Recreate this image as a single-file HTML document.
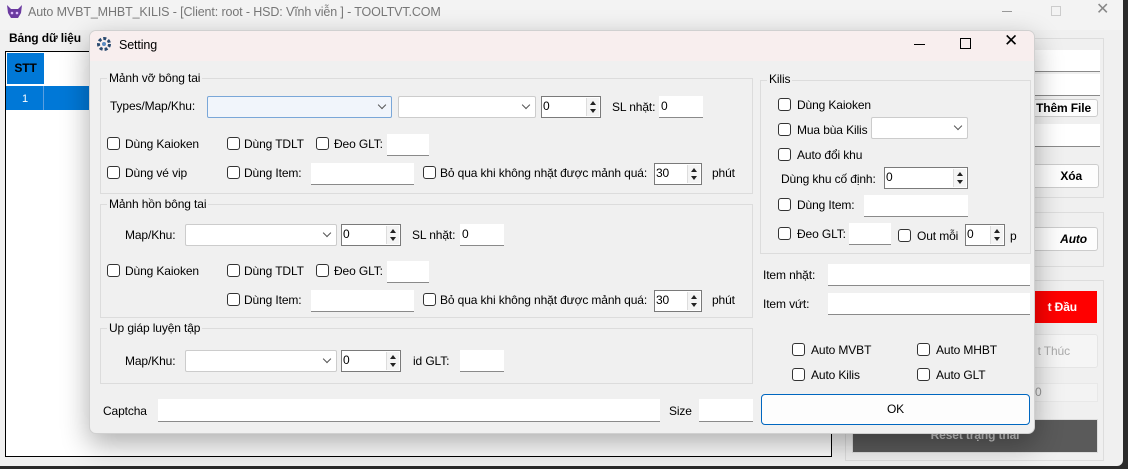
<!DOCTYPE html>
<html><head><meta charset="utf-8"><style>
*{box-sizing:border-box;margin:0;padding:0}
body{width:1128px;height:469px;overflow:hidden;background:#2a2a2a;font-family:"Liberation Sans","DejaVu Sans",sans-serif;font-size:12px;color:#000;position:relative;letter-spacing:-0.12px}
.a{position:absolute}
.t{position:absolute;white-space:nowrap;line-height:14px}
.tb{position:absolute;background:#fff;border-bottom:1px solid #8a8a8a}
.cb{position:absolute;width:13px;height:13px;border:1px solid #333;border-radius:3px;background:#fff}
.cmb{position:absolute;background:#fff;border:1px solid #ccc;border-radius:2px}
.cmb:after{content:"";position:absolute;right:6px;top:5px;width:5px;height:5px;border-right:1px solid #555;border-bottom:1px solid #555;transform:rotate(45deg)}
.sp{position:absolute;background:#fff;border:1px solid #7a7a7a;padding-left:1px;line-height:18px}
.sp i{position:absolute;right:1px;top:1px;width:13px;bottom:1px;border-left:1px solid #ddd;background:#f4f4f4}
.sp i:before{content:"";position:absolute;left:3px;top:3px;border:3px solid transparent;border-bottom:4px solid #222;border-top:0}
.sp i:after{content:"";position:absolute;left:3px;bottom:3px;border:3px solid transparent;border-top:4px solid #222;border-bottom:0}
.grp{position:absolute;border:1px solid #dcdcdc}
.gl{position:absolute;background:#f0f0f0;padding:0 2px;white-space:nowrap;line-height:14px}
</style></head><body>
<!-- main window -->
<div class="a" style="left:0;top:0;width:1123px;height:466px;background:#f0f0f0;border-radius:0 0 6px 0"></div>
<div class="a" style="left:0;top:0;width:1123px;height:30px;background:#f3f3f3"></div>
<svg class="a" style="left:6px;top:4px" width="17" height="16" viewBox="0 0 17 16"><path d="M1 1 L5 5 L12 5 L16 1 L15 9 L12 14 L5 14 L2 9Z" fill="#6b3aa0"/><circle cx="6" cy="9" r="1.3" fill="#e0c0ff"/><circle cx="11" cy="9" r="1.3" fill="#e0c0ff"/></svg>
<div class="t" style="left:28px;top:5px;color:#777;font-size:12.5px">Auto MVBT_MHBT_KILIS - [Client: root - HSD: Vĩnh viễn ] - TOOLTVT.COM</div>
<div class="a" style="left:1002px;top:11px;width:10px;height:1px;background:#999"></div>
<div class="a" style="left:1051px;top:6px;width:10px;height:10px;border:1px solid #ccc"></div>
<div class="t" style="left:1096px;top:3px;color:#888;font-size:16px">✕</div>
<div class="t" style="left:9px;top:31px;font-weight:bold">Bảng dữ liệu</div>
<div class="a" style="left:5px;top:51px;width:827px;height:406px;border:1px solid #000;background:#fff"></div>
<div class="a" style="left:7px;top:53px;width:37px;height:31px;background:#0078d7;color:#000;font-weight:bold;text-align:center;line-height:31px">STT</div>
<div class="a" style="left:6px;top:86px;width:825px;height:24px;background:#0078d7"></div>
<div class="a" style="left:43px;top:86px;width:1px;height:24px;background:#5a9fe0"></div>
<div class="t" style="left:22px;top:92px;color:#fff;font-size:11px">1</div>
<div class="a" style="left:845px;top:38px;width:259px;height:160px;border:1px solid #ddd"></div>
<div class="tb" style="left:1030px;top:50px;width:70px;height:22px"></div>
<div class="tb" style="left:1030px;top:74px;width:70px;height:22px"></div>
<div class="a" style="left:1030px;top:99px;width:68px;height:18px;background:#fdfdfd;border:1px solid #ccc;border-radius:3px;font-weight:bold;text-align:right;padding-right:6px;line-height:16px">Thêm File</div>
<div class="tb" style="left:1030px;top:124px;width:70px;height:23px"></div>
<div class="a" style="left:1030px;top:164px;width:69px;height:24px;background:#fdfdfd;border:1px solid #ccc;border-radius:3px;font-weight:bold;text-align:right;padding-right:16px;line-height:22px">Xóa</div>
<div class="a" style="left:845px;top:212px;width:259px;height:55px;border:1px solid #ddd"></div>
<div class="a" style="left:1030px;top:227px;width:68px;height:24px;background:#fdfdfd;border:1px solid #ccc;border-radius:3px;font-weight:bold;font-style:italic;text-align:right;padding-right:10px;line-height:22px">Auto</div>
<div class="a" style="left:845px;top:280px;width:259px;height:181px;border:1px solid #ddd"></div>
<div class="a" style="left:1030px;top:291px;width:67px;height:32px;background:#f00;color:#fff;font-weight:bold;text-align:right;padding-right:20px;line-height:32px">t Đầu</div>
<div class="a" style="left:1030px;top:334px;width:68px;height:34px;background:#f5f5f5;border:1px solid #e5e5e5;border-radius:3px;color:#aaa;text-align:right;padding-right:27px;line-height:32px">t Thúc</div>
<div class="a" style="left:1030px;top:383px;width:68px;height:19px;background:#f3f3f3;border:1px solid #e8e8e8;color:#999;padding-left:4px;line-height:17px">0</div>
<div class="a" style="left:852px;top:419px;width:246px;height:34px;background:#5a5a5a;border:1px solid #ddd;color:#c8c8c8;font-weight:bold;text-align:center;line-height:30px">Reset trạng thái</div>

<!-- dialog -->
<div class="a" style="left:89px;top:30px;width:946px;height:404px;background:#f0f0f0;border:1px solid #d0d0d0;border-radius:7px;box-shadow:0 10px 28px rgba(0,0,0,.32);overflow:hidden">
<div class="a" style="left:0;top:0;width:946px;height:30px;background:#f8eeee"></div>
</div>
<svg class="a" style="left:96px;top:36px" width="16" height="16" viewBox="0 0 16 16"><circle cx="8" cy="8" r="5.5" fill="none" stroke="#2a4a70" stroke-width="3" stroke-dasharray="3 2"/><circle cx="8" cy="8" r="2" fill="#5a8ac0"/></svg>
<div class="t" style="left:119px;top:38px;font-size:12.5px">Setting</div>
<div class="a" style="left:914px;top:44px;width:11px;height:1px;background:#000"></div>
<div class="a" style="left:960px;top:38px;width:11px;height:11px;border:1px solid #000"></div>
<div class="t" style="left:1004px;top:34px;font-size:17px">✕</div>

<!-- group 1 -->
<div class="grp" style="left:100px;top:78px;width:653px;height:116px"></div>
<div class="gl" style="left:107px;top:71px">Mảnh vỡ bông tai</div>
<div class="t" style="left:110px;top:99px">Types/Map/Khu:</div>
<div class="cmb" style="left:207px;top:96px;width:185px;height:22px;border-color:#7aa7d8;background:#f1f5fb"></div>
<div class="cmb" style="left:398px;top:96px;width:138px;height:22px"></div>
<div class="sp" style="left:541px;top:96px;width:60px;height:22px">0<i></i></div>
<div class="t" style="left:612px;top:100px">SL nhặt:</div>
<div class="tb" style="left:659px;top:96px;width:44px;height:22px;padding-left:2px;line-height:21px">0</div>
<div class="cb" style="left:107px;top:137px"></div><div class="t" style="left:125px;top:137px">Dùng Kaioken</div>
<div class="cb" style="left:227px;top:137px"></div><div class="t" style="left:244px;top:137px">Dùng TDLT</div>
<div class="cb" style="left:316px;top:137px"></div><div class="t" style="left:334px;top:137px">Đeo GLT:</div>
<div class="tb" style="left:387px;top:134px;width:42px;height:22px"></div>
<div class="cb" style="left:107px;top:166px"></div><div class="t" style="left:125px;top:166px">Dùng vé vip</div>
<div class="cb" style="left:227px;top:166px"></div><div class="t" style="left:244px;top:166px">Dùng Item:</div>
<div class="tb" style="left:311px;top:163px;width:103px;height:22px"></div>
<div class="cb" style="left:423px;top:166px"></div><div class="t" style="left:440px;top:166px">Bỏ qua khi không nhặt được mảnh quá:</div>
<div class="sp" style="left:654px;top:163px;width:48px;height:22px">30<i></i></div>
<div class="t" style="left:712px;top:166px">phút</div>

<!-- group 2 -->
<div class="grp" style="left:100px;top:204px;width:653px;height:114px"></div>
<div class="gl" style="left:107px;top:197px">Mảnh hồn bông tai</div>
<div class="t" style="left:125px;top:228px">Map/Khu:</div>
<div class="cmb" style="left:185px;top:224px;width:152px;height:22px"></div>
<div class="sp" style="left:341px;top:224px;width:60px;height:22px">0<i></i></div>
<div class="t" style="left:412px;top:228px">SL nhặt:</div>
<div class="tb" style="left:460px;top:224px;width:44px;height:22px;padding-left:2px;line-height:21px">0</div>
<div class="cb" style="left:107px;top:264px"></div><div class="t" style="left:125px;top:264px">Dùng Kaioken</div>
<div class="cb" style="left:227px;top:264px"></div><div class="t" style="left:244px;top:264px">Dùng TDLT</div>
<div class="cb" style="left:316px;top:264px"></div><div class="t" style="left:334px;top:264px">Đeo GLT:</div>
<div class="tb" style="left:387px;top:261px;width:42px;height:22px"></div>
<div class="cb" style="left:227px;top:293px"></div><div class="t" style="left:244px;top:293px">Dùng Item:</div>
<div class="tb" style="left:311px;top:290px;width:103px;height:22px"></div>
<div class="cb" style="left:423px;top:293px"></div><div class="t" style="left:440px;top:293px">Bỏ qua khi không nhặt được mảnh quá:</div>
<div class="sp" style="left:654px;top:290px;width:48px;height:22px">30<i></i></div>
<div class="t" style="left:712px;top:293px">phút</div>

<!-- group 3 -->
<div class="grp" style="left:100px;top:328px;width:653px;height:56px"></div>
<div class="gl" style="left:107px;top:321px">Up giáp luyện tập</div>
<div class="t" style="left:125px;top:354px">Map/Khu:</div>
<div class="cmb" style="left:185px;top:350px;width:152px;height:22px"></div>
<div class="sp" style="left:341px;top:350px;width:60px;height:22px">0<i></i></div>
<div class="t" style="left:413px;top:354px">id GLT:</div>
<div class="tb" style="left:460px;top:350px;width:44px;height:22px"></div>

<div class="t" style="left:103px;top:404px">Captcha</div>
<div class="tb" style="left:158px;top:399px;width:502px;height:23px"></div>
<div class="t" style="left:669px;top:404px">Size</div>
<div class="tb" style="left:699px;top:399px;width:54px;height:23px"></div>

<!-- Kilis -->
<div class="grp" style="left:760px;top:80px;width:271px;height:174px"></div>
<div class="gl" style="left:767px;top:72px">Kilis</div>
<div class="cb" style="left:778px;top:98px"></div><div class="t" style="left:797px;top:98px">Dùng Kaioken</div>
<div class="cb" style="left:778px;top:123px"></div><div class="t" style="left:797px;top:123px">Mua bùa Kilis</div>
<div class="cmb" style="left:871px;top:117px;width:97px;height:22px"></div>
<div class="cb" style="left:778px;top:148px"></div><div class="t" style="left:797px;top:148px">Auto đổi khu</div>
<div class="t" style="left:781px;top:172px">Dùng khu cố định:</div>
<div class="sp" style="left:884px;top:167px;width:84px;height:22px">0<i></i></div>
<div class="cb" style="left:778px;top:198px"></div><div class="t" style="left:797px;top:198px">Dùng Item:</div>
<div class="tb" style="left:864px;top:195px;width:104px;height:22px"></div>
<div class="cb" style="left:778px;top:227px"></div><div class="t" style="left:797px;top:227px">Đeo GLT:</div>
<div class="tb" style="left:849px;top:223px;width:42px;height:22px"></div>
<div class="cb" style="left:898px;top:229px"></div><div class="t" style="left:917px;top:229px">Out mỗi</div>
<div class="sp" style="left:965px;top:224px;width:40px;height:22px">0<i></i></div>
<div class="t" style="left:1010px;top:229px">p</div>
<div class="t" style="left:763px;top:268px">Item nhặt:</div>
<div class="tb" style="left:828px;top:264px;width:202px;height:22px"></div>
<div class="t" style="left:763px;top:297px">Item vứt:</div>
<div class="tb" style="left:828px;top:293px;width:202px;height:22px"></div>
<div class="cb" style="left:792px;top:343px"></div><div class="t" style="left:811px;top:343px">Auto MVBT</div>
<div class="cb" style="left:917px;top:343px"></div><div class="t" style="left:936px;top:343px">Auto MHBT</div>
<div class="cb" style="left:792px;top:368px"></div><div class="t" style="left:811px;top:368px">Auto Kilis</div>
<div class="cb" style="left:917px;top:368px"></div><div class="t" style="left:936px;top:368px">Auto GLT</div>
<div class="a" style="left:761px;top:394px;width:269px;height:31px;background:#fdfdfd;border:1px solid #0067c0;border-radius:4px;text-align:center;line-height:29px">OK</div>
</body></html>
